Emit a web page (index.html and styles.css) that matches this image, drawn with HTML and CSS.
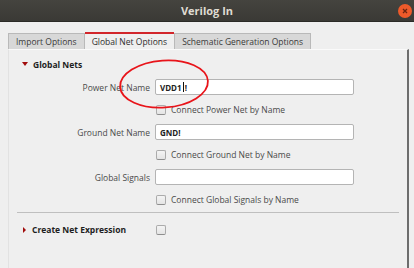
FILE: index.html
```html
<!DOCTYPE html>
<html>
<head>
<meta charset="utf-8">
<link rel="stylesheet" href="styles.css">
</head>
<body>
<div class="titlebar">
  <span class="title">Verilog In</span>
  <span class="close">
    <svg width="14" height="14" viewBox="0 0 14 14"><circle cx="7" cy="7" r="7" fill="#ee5a2a"/><path d="M5 5 L9 9 M9 5 L5 9" stroke="#6b2410" stroke-width="1.3"/></svg>
  </span>
</div>
<div class="tabs">
  <div class="tab">Import Options</div>
  <div class="tab active">Global Net Options</div>
  <div class="tab">Schematic Generation Options</div>
</div>
<div class="panel">
  <div class="section-head"><span class="tri-down"></span>Global Nets</div>
  <div class="form">
    <label class="lbl">Power Net Name</label>
    <div class="input"><span>VDD1</span><span class="caret"></span><span>!</span></div>
    <span></span>
    <div class="check"><span class="box"></span>Connect Power Net by Name</div>
    <label class="lbl">Ground Net Name</label>
    <div class="input"><span>GND!</span></div>
    <span></span>
    <div class="check"><span class="box"></span>Connect Ground Net by Name</div>
    <label class="lbl">Global Signals</label>
    <div class="input"></div>
    <span></span>
    <div class="check"><span class="box"></span>Connect Global Signals by Name</div>
  </div>
  <div class="sep"></div>
  <div class="form expr">
    <div class="section-head inline"><span class="tri-right"></span>Create Net Expression</div>
    <div class="check"><span class="box"></span></div>
  </div>
  <svg class="annot" width="94" height="54" viewBox="0 0 94 54"><ellipse cx="47" cy="27" rx="44" ry="23.5" fill="none" stroke="#e8141a" stroke-width="1.8" transform="rotate(-4 47 27)"/></svg>
</div>
</body>
</html>
```
FILE: styles.css
```css
* { box-sizing: border-box; }
html, body { margin: 0; padding: 0; }
body {
  width: 414px;
  height: 268px;
  overflow: hidden;
  background: #efefef;
  font-family: "Open Sans", "Noto Sans", sans-serif;
  font-size: 8.5px;
  color: #3c3c3c;
}
.titlebar {
  height: 22px;
  background: linear-gradient(#45443f, #3a3935);
  border-bottom: 1px solid #2b2a27;
  display: flex;
  align-items: center;
  justify-content: center;
  position: relative;
}
.title {
  color: #dfdbd2;
  font-weight: bold;
  font-size: 11px;
}
.close {
  position: absolute;
  right: 2px;
  top: 4px;
  width: 14px;
  height: 14px;
  display: flex;
}
.tabs {
  display: flex;
  padding: 0 0 0 8px;
  height: 27px;
  align-items: flex-end;
}
.tab {
  height: 16px;
  padding: 0 7px;
  background: #d8d8d8;
  border: 1px solid #b9b9b9;
  border-bottom: none;
  display: flex;
  align-items: center;
  color: #3a3a3a;
}
.tab.active {
  height: 17px;
  background: #efefef;
  border: none;
  border-top: 2px solid #d2262b;
  color: #2e2e2e;
}
.panel {
  position: relative;
  margin-left: 8px;
  width: 401px;
  height: 219px;
  border-top: 1px solid #fafafa;
  border-left: 1px solid #e2e2e2;
  border-right: 2px solid #6d6d6d;
  padding-top: 7px;
}
.section-head {
  display: flex;
  align-items: center;
  height: 14px;
  padding-left: 13px;
  font-weight: bold;
  color: #1e1e1e;
}
.tri-down {
  width: 0; height: 0;
  border-left: 3px solid transparent;
  border-right: 3px solid transparent;
  border-top: 4px solid #a10c0c;
  margin-right: 5px;
}
.tri-right {
  width: 0; height: 0;
  border-top: 3px solid transparent;
  border-bottom: 3px solid transparent;
  border-left: 3px solid #a10c0c;
  margin-right: 6px;
  margin-left: 1px;
}
.form {
  display: grid;
  grid-template-columns: 141px 199px;
  column-gap: 5px;
  row-gap: 7px;
  grid-auto-rows: auto;
  margin-top: 8px;
}
.lbl {
  text-align: right;
  align-self: center;
  color: #4a4a4a;
  font-size: 8.5px;
}
.input {
  height: 16px;
  background: #fff;
  border: 1px solid #b4b4b4;
  border-radius: 2px;
  display: flex;
  align-items: center;
  padding-left: 4px;
  font-weight: bold;
  color: #222;
  font-size: 8px;
}
.caret {
  width: 1px;
  height: 10px;
  background: #111;
  margin: 0 1px;
}
.check {
  height: 15px;
  display: flex;
  align-items: center;
  padding-left: 1px;
  color: #4a4a4a;
}
.box {
  width: 10px;
  height: 10px;
  border: 1px solid #ababab;
  border-bottom-color: #8e8e8e;
  border-radius: 2px;
  background: linear-gradient(#f4f4f4, #e4e4e4);
  margin-right: 5px;
}
.sep {
  height: 1px;
  background: #bfbfbf;
  margin: 5px 8px 0 8px;
}
.expr {
  margin-top: 9px;
  row-gap: 0;
}
.section-head.inline {
  padding-left: 13px;
  height: 15px;
}
.annot {
  position: absolute;
  left: 108px;
  top: 7px;
}
```
